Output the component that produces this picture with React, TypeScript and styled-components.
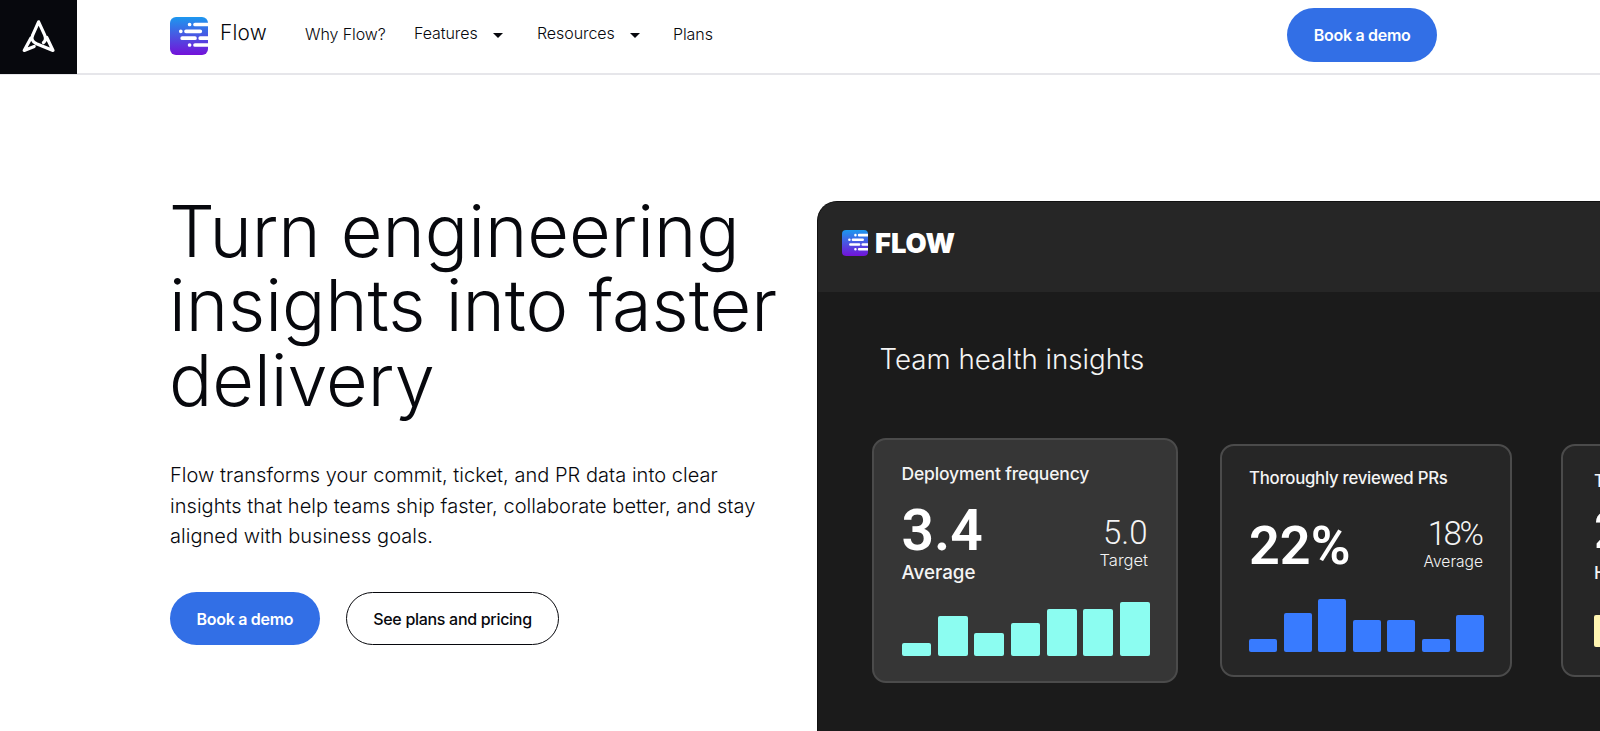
import React from 'react'
import styled, { createGlobalStyle } from 'styled-components'

const Color = {
  ink: '#07080d',
  blue: '#326fe6',
  line: '#e6e6ea',
  panel: '#1b1b1b',
  panelTop: '#262626',
  cardActive: '#363636',
  cardBorder: '#4b4b4b',
  aqua: '#8cfdf1',
  azure: '#387bff',
  yellow: '#fff5b1',
}

const GlobalStyle = createGlobalStyle`
  * {
    box-sizing: border-box;
  }

  body {
    margin: 0;
    background: #fff;
    color: ${Color.ink};
    font-family: Inter, 'Liberation Sans', sans-serif;
    overflow: hidden;
  }
`

const Page = styled.div`
  display: flex;
  flex-direction: column;
  height: 100vh;
  overflow: hidden;
`

const Header = styled.header`
  display: flex;
  flex: none;
  height: 75px;
  border-bottom: 2px solid ${Color.line};
`

const HomeLink = styled.a`
  display: flex;
  flex: none;
  width: 77px;
  height: 74px;
  padding: 12px 0 0 15px;
  background: ${Color.ink};
`

const Brand = styled.a`
  display: flex;
  gap: 12px;
  width: 135px;
  margin-left: 93px;
  padding-top: 17px;
`

const BrandName = styled.span`
  padding-top: 4px;
  font-size: 20.8px;
  font-weight: 350;
  line-height: 24px;
  letter-spacing: 0.2px;
`

const Nav = styled.nav`
  display: flex;
  padding-top: 23px;
`

const NavItem = styled.a<{ $width: number; $drop?: boolean }>`
  display: flex;
  gap: 15px;
  width: ${({ $width }) => $width}px;
  padding-top: ${({ $drop }) => ($drop ? 0 : 1)}px;
  font-size: 16px;
  font-weight: 350;
  line-height: 20px;
  letter-spacing: -0.08px;
  white-space: nowrap;
`

const Caret = styled.span`
  width: 0;
  height: 0;
  margin-top: 10px;
  border: 5px solid transparent;
  border-top-color: ${Color.ink};
  border-bottom: 0;
`

const Button = styled.button<{ $outline?: boolean }>`
  height: 53.5px;
  padding: 0 26.5px;
  border: ${({ $outline }) => ($outline ? `1.5px solid ${Color.ink}` : '0')};
  border-radius: 27px;
  background: ${({ $outline }) => ($outline ? '#fff' : Color.blue)};
  color: ${({ $outline }) => ($outline ? Color.ink : '#fff')};
  font-family: inherit;
  font-size: 16px;
  font-weight: ${({ $outline }) => ($outline ? 500 : 600)};
  letter-spacing: -0.3px;
  white-space: nowrap;
`

const HeaderAction = styled.div`
  margin-left: auto;
  padding: 8px 163px 0 0;
`

const Hero = styled.main`
  display: flex;
  flex: 1;
  min-height: 0;
`

const Intro = styled.section`
  flex: none;
  width: 817px;
  padding: 119px 0 0 170px;
`

const Title = styled.h1`
  margin: 0 0 0 -1px;
  font-size: 72px;
  font-weight: 260;
  line-height: 74.3px;
  letter-spacing: -0.05px;
  white-space: nowrap;
`

const Lead = styled.p`
  margin: 43.5px 0 40px;
  font-size: 20px;
  font-weight: 300;
  line-height: 30.5px;
  letter-spacing: 0.04px;
  white-space: nowrap;
`

const Actions = styled.div`
  display: flex;
  gap: 26px;
`

const Panel = styled.section`
  flex: none;
  width: 900px;
  margin-top: 126px;
  border-radius: 20px 0 0 0;
  border: solid #111;
  border-width: 1px 0 0 1px;
  background: ${Color.panel};
  color: #f4f4f4;
  overflow: hidden;
`

const PanelHeader = styled.div`
  display: flex;
  gap: 7px;
  height: 90px;
  padding: 27.5px 0 0 24px;
  background: ${Color.panelTop};
`

const PanelBrand = styled.span`
  color: #fff;
  font-size: 27.3px;
  font-weight: 900;
  line-height: 27px;
`

const PanelTitle = styled.h2`
  margin: 50px 0 61px 61.5px;
  font-size: 27.7px;
  font-weight: 320;
  line-height: 35px;
`

const Cards = styled.div`
  display: flex;
  align-items: center;
  margin-left: 54px;
`

const Card = styled.article<{ $active?: boolean; $left?: number; $bottom?: number }>`
  display: flex;
  flex: none;
  flex-direction: column;
  width: ${({ $active }) => ($active ? 306 : 292)}px;
  height: ${({ $active }) => ($active ? 245 : 233)}px;
  margin-right: ${({ $active }) => ($active ? 42 : 49)}px;
  margin-bottom: ${({ $active }) => ($active ? 0 : 1)}px;
  padding-top: ${({ $active }) => ($active ? 23 : 21)}px;
  padding-right: ${({ $active }) => ($active ? 26.5 : 25.5)}px;
  padding-bottom: ${({ $bottom = 25 }) => $bottom}px;
  padding-left: ${({ $left = 27.5 }) => $left}px;
  border: 2px solid ${Color.cardBorder};
  border-radius: 14px;
  background: ${({ $active }) => ($active ? Color.cardActive : Color.panelTop)};
`

const CardTitle = styled.h3<{ $small?: boolean; $drop?: number }>`
  margin: ${({ $drop = 0 }) => $drop}px 0 0;
  font-size: ${({ $small }) => ($small ? 16.8 : 17.5)}px;
  font-weight: 500;
  line-height: 22px;
  letter-spacing: ${({ $small }) => ($small ? -0.27 : -0.15)}px;
  white-space: nowrap;
`

const Stats = styled.div<{ $top: number }>`
  display: flex;
  justify-content: space-between;
  margin-top: ${({ $top }) => $top}px;
`

const Stat = styled.div<{ $top?: number; $end?: boolean }>`
  display: flex;
  flex-direction: column;
  align-items: ${({ $end }) => ($end ? 'flex-end' : 'flex-start')};
  margin-top: ${({ $top = 0 }) => $top}px;
`

const BigNumber = styled.span<{ $size: number }>`
  color: #fff;
  font-family: Roboto, sans-serif;
  font-size: ${({ $size }) => $size}px;
  font-weight: 600;
  line-height: 60px;
`

const SmallNumber = styled.span<{ $spacing?: number; $right?: number }>`
  padding-right: ${({ $right = 0 }) => $right}px;
  font-family: Roboto, sans-serif;
  font-size: 33px;
  font-weight: 300;
  line-height: 35px;
  letter-spacing: ${({ $spacing = 0 }) => $spacing}px;
`

const StatLabel = styled.span<{ $strong?: boolean; $size: number }>`
  padding-top: ${({ $strong }) => ($strong ? 1 : 0)}px;
  padding-right: ${({ $strong }) => ($strong ? 0 : 1.5)}px;
  font-size: ${({ $size }) => $size}px;
  font-weight: ${({ $strong }) => ($strong ? 500 : 350)};
  line-height: 21px;
`

const Bars = styled.div<{ $gap: number }>`
  display: flex;
  align-items: flex-end;
  gap: ${({ $gap }) => $gap}px;
  margin-top: auto;
`

const Bar = styled.span<{ $color: string }>`
  flex: 1;
  border-radius: 2px;
  background: ${({ $color }) => $color};
`

const FlowIcon = ({ size, id }: { size: number; id: string }) => (
  <svg width={size} height={size} viewBox="0 0 38 38">
    <defs>
      <linearGradient id={id} x1="0" y1="0" x2="0" y2="1">
        <stop offset="0" stopColor="#1c98ef" />
        <stop offset="0.5" stopColor="#4a55e2" />
        <stop offset="1" stopColor="#7312d9" />
      </linearGradient>
      <clipPath id={`${id}-clip`}>
        <rect width="38" height="38" rx="6" />
      </clipPath>
    </defs>
    <g clipPath={`url(#${id}-clip)`}>
      <rect width="38" height="38" fill={`url(#${id})`} />
      <path
        d="M19.6 7.5h.01M25 7.5h16M10.8 14.3h.01M16 14.3h14.3M12.2 21.2h12.8M30.2 21.2h12M19.6 28h.01M25 28h16"
        stroke="#fff"
        strokeWidth="3.7"
        strokeLinecap="round"
      />
    </g>
  </svg>
)

const AIcon = () => (
  <svg width="48" height="48" viewBox="0 0 48 48" fill="none" stroke="#fff" strokeWidth="3.2" strokeLinejoin="round" strokeLinecap="round">
    <path d="M31.8 25.5 38 38.4 21.5 31.8C17.2 29.8 16 26.6 17.8 22.8L23.6 9.8 29.6 22.8C31.2 26.6 30.6 29 28.4 30.6" />
    <path d="M15.8 26.2 9.2 38.4 19.2 34.4" />
  </svg>
)

const navItems = [
  { title: 'Why Flow?', width: 109 },
  { title: 'Features', width: 123, drop: true },
  { title: 'Resources', width: 136, drop: true },
  { title: 'Plans', width: 60 },
]

const frequency = [13, 40, 23, 33, 47.5, 47.5, 54.5]
const reviewed = [13, 38.5, 53, 31.5, 31.5, 13, 37]
const third = [32.5, 32.5, 32.5, 32.5, 32.5, 32.5, 32.5]

const Chart = ({ data, color, gap }: { data: number[]; color: string; gap: number }) => (
  <Bars $gap={gap}>
    {data.map((height, index) => (
      <Bar key={index} $color={color} style={{ height }} />
    ))}
  </Bars>
)

const TopMenu = () => (
  <Header>
    <HomeLink>
      <AIcon />
    </HomeLink>
    <Brand>
      <FlowIcon size={38} id="brand" />
      <BrandName>Flow</BrandName>
    </Brand>
    <Nav>
      {navItems.map(({ title, width, drop }) => (
        <NavItem key={title} $width={width} $drop={drop}>
          {title}
          {drop && <Caret />}
        </NavItem>
      ))}
    </Nav>
    <HeaderAction>
      <Button>Book a demo</Button>
    </HeaderAction>
  </Header>
)

const InsightsPanel = () => (
  <Panel>
    <PanelHeader>
      <FlowIcon size={26} id="panel" />
      <PanelBrand>FLOW</PanelBrand>
    </PanelHeader>
    <PanelTitle>Team health insights</PanelTitle>
    <Cards>
      <Card $active>
        <CardTitle>Deployment frequency</CardTitle>
        <Stats $top={16}>
          <Stat>
            <BigNumber $size={57}>3.4</BigNumber>
            <StatLabel $strong $size={18.8}>Average</StatLabel>
          </Stat>
          <Stat $top={14} $end>
            <SmallNumber $right={2}>5.0</SmallNumber>
            <StatLabel $size={16.5}>Target</StatLabel>
          </Stat>
        </Stats>
        <Chart data={frequency} color={Color.aqua} gap={6.7} />
      </Card>
      <Card $bottom={23} $left={27}>
        <CardTitle $small>Thoroughly reviewed PRs</CardTitle>
        <Stats $top={27}>
          <Stat>
            <BigNumber $size={54}>22%</BigNumber>
          </Stat>
          <Stat $end>
            <SmallNumber $spacing={-2.4} $right={3}>18%</SmallNumber>
            <StatLabel $size={15.6}>Average</StatLabel>
          </Stat>
        </Stats>
        <Chart data={reviewed} color={Color.azure} gap={6.6} />
      </Card>
      <Card $bottom={27.5} $left={31}>
        <CardTitle $small $drop={3}>T</CardTitle>
        <Stats $top={9}>
          <Stat>
            <BigNumber $size={52}>2</BigNumber>
            <StatLabel $strong $size={17.5}>H</StatLabel>
          </Stat>
        </Stats>
        <Chart data={third} color={Color.yellow} gap={6.6} />
      </Card>
    </Cards>
  </Panel>
)

const App = () => (
  <Page>
    <GlobalStyle />
    <TopMenu />
    <Hero>
      <Intro>
        <Title>
          Turn engineering
          <br />
          insights into faster
          <br />
          delivery
        </Title>
        <Lead>
          Flow transforms your commit, ticket, and PR data into clear
          <br />
          insights that help teams ship faster, collaborate better, and stay
          <br />
          aligned with business goals.
        </Lead>
        <Actions>
          <Button>Book a demo</Button>
          <Button $outline>See plans and pricing</Button>
        </Actions>
      </Intro>
      <InsightsPanel />
    </Hero>
  </Page>
)

export default App
